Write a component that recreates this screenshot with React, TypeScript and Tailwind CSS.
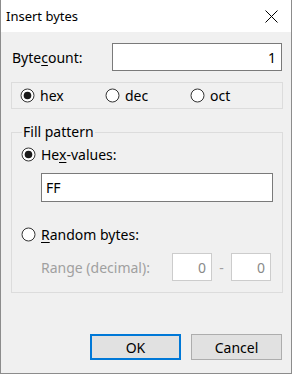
import React from 'react';

const Radio: React.FC<{ checked?: boolean }> = ({ checked }) => (
  <svg width="15" height="15" viewBox="0 0 15 15" className="shrink-0">
    <circle cx="7.5" cy="7.5" r="6.5" fill="#ffffff" stroke="#333333" strokeWidth="1" />
    {checked && <circle cx="7.5" cy="7.5" r="3.8" fill="#1a1a1a" />}
  </svg>
);

const RadioItem: React.FC<{ checked?: boolean; className?: string; children: React.ReactNode }> = ({ checked, className, children }) => (
  <div className={`flex items-center gap-[5px] ${className ?? ''}`}>
    <Radio checked={checked} />
    <span className="leading-[15px]">{children}</span>
  </div>
);

export default function App() {
  return (
    <div className="w-[293px] h-[375px] bg-white" style={{ fontFamily: '"Noto Sans", "Open Sans", sans-serif' }}>
      <div className="w-[292px] h-[374px] flex flex-col border-x border-b border-[#8c8c8c] text-[14px] text-black">
        {/* Title bar */}
        <div className="h-[32px] bg-white flex items-center pl-[5px] pr-[13px]">
          <span className="flex-1 text-[13px] leading-none">Insert bytes</span>
          <svg width="13" height="13" viewBox="0 0 13 13">
            <path d="M0.5 0.5 L12.5 12.5 M12.5 0.5 L0.5 12.5" stroke="#000" strokeWidth="1" />
          </svg>
        </div>

        {/* Body */}
        <div className="flex-1 bg-[#f0f0f0] flex flex-col pt-[11px]">
          {/* Bytecount */}
          <div className="flex items-center pl-[11px] pr-[9px]">
            <span className="flex-1">
              Byte<u className="underline-offset-2">c</u>ount:
            </span>
            <div className="w-[170px] h-[28px] bg-white border border-[#7a7a7a] flex items-center justify-end pr-[5px]">
              1
            </div>
          </div>

          {/* Base */}
          <div className="mt-[11px] ml-[10px] w-[272px] h-[27px] border border-[#dcdcdc] flex items-center pl-[8px]">
            <RadioItem checked className="w-[85px]">hex</RadioItem>
            <RadioItem className="w-[85px]">dec</RadioItem>
            <RadioItem>oct</RadioItem>
          </div>

          {/* Fill pattern */}
          <div className="relative mt-[23px] ml-[10px] w-[272px] h-[161px] border border-[#dcdcdc] flex flex-col pt-[14px]">
            <span className="absolute -top-[9px] left-[10px] px-[1px] bg-[#f0f0f0] leading-[16px]">Fill pattern</span>

            <RadioItem checked className="pl-[9px]">
              He<u className="underline-offset-2">x</u>-values:
            </RadioItem>

            <div className="mt-[11px] ml-[29px] w-[232px] h-[29px] bg-white border border-[#7a7a7a] flex items-center pl-[4px]">
              FF
            </div>

            <RadioItem className="pl-[9px] mt-[25px]">
              <u className="underline-offset-2">R</u>andom bytes:
            </RadioItem>

            <div className="mt-[11px] flex items-center pl-[29px] text-[#a0a0a0]">
              <span className="w-[131px]">Range (decimal):</span>
              <div className="w-[40px] h-[28px] bg-white border border-[#cccccc] flex items-center justify-end pr-[5px] text-[#8a8a8a]">0</div>
              <span className="w-[19px] text-center">-</span>
              <div className="w-[40px] h-[28px] bg-white border border-[#cccccc] flex items-center justify-end pr-[5px] text-[#8a8a8a]">0</div>
            </div>
          </div>

          {/* Buttons */}
          <div className="mt-auto flex justify-end gap-[10px] pr-[9px] pb-[13px]">
            <button className="w-[91px] h-[26px] bg-[#e1e1e1] border-2 border-[#0078d7] flex items-center justify-center">OK</button>
            <button className="w-[91px] h-[26px] bg-[#e1e1e1] border border-[#adadad] flex items-center justify-center">Cancel</button>
          </div>
        </div>
      </div>
    </div>
  );
}
